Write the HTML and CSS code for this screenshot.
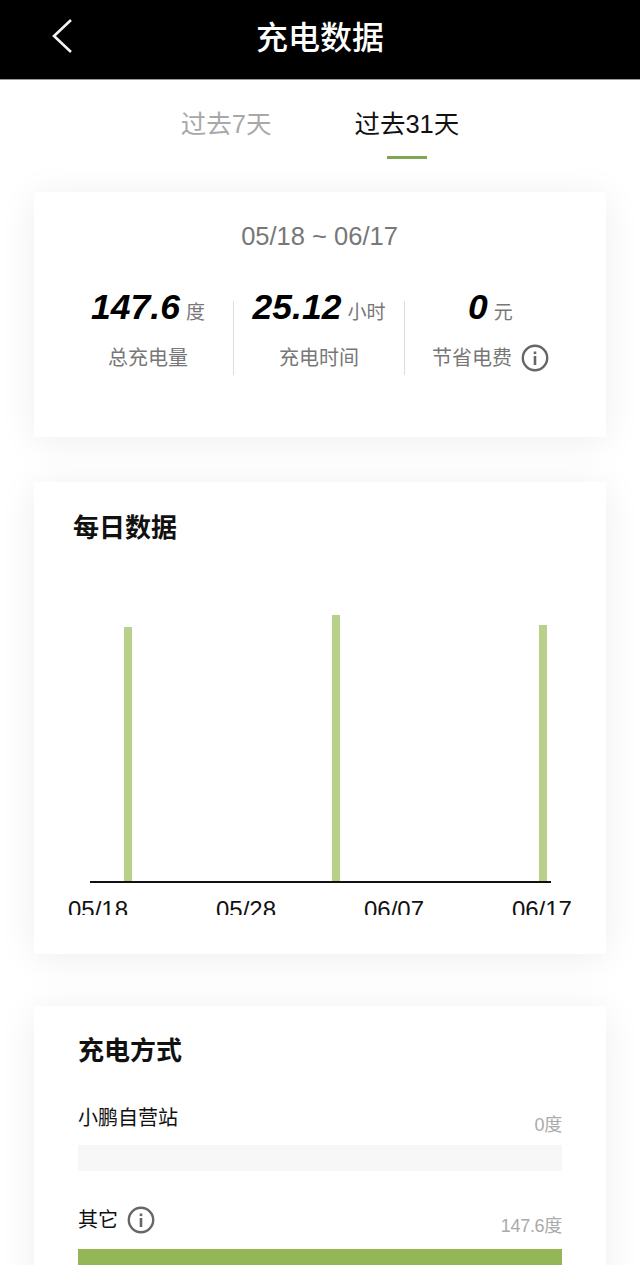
FILE: index.html
```html
<!DOCTYPE html>
<html lang="zh-CN">
<head>
    <meta charset="UTF-8">
    <meta name="viewport" content="width=device-width, initial-scale=1.0">
    <title>充电数据</title>
    <link rel="stylesheet" href="styles.css">
</head>
<body>
    <header class="topbar">
        <a href="#" class="back" aria-label="返回">
            <svg width="22" height="34" viewBox="0 0 22 34"><path d="M20 1 L3 17 L20 33" fill="none" stroke="#f2f2f2" stroke-width="2.6"/></svg>
        </a>
        <h1>充电数据</h1>
    </header>

    <nav class="tabs">
        <a href="#" class="tab">过去7天</a>
        <a href="#" class="tab active">过去31天</a>
    </nav>

    <section class="card summary">
        <div class="date-range">05/18 ~ 06/17</div>
        <div class="stats">
            <div class="stat">
                <div class="stat-value"><strong>147.6</strong><span>度</span></div>
                <div class="stat-label">总充电量</div>
            </div>
            <div class="stat">
                <div class="stat-value"><strong>25.12</strong><span>小时</span></div>
                <div class="stat-label">充电时间</div>
            </div>
            <div class="stat">
                <div class="stat-value"><strong>0</strong><span>元</span></div>
                <div class="stat-label">节省电费
                    <svg class="info" width="28" height="28" viewBox="0 0 28 28"><circle cx="14" cy="14" r="12.2" fill="none" stroke="#666" stroke-width="2.4"/><rect x="12.7" y="12" width="2.6" height="9" fill="#666"/><rect x="12.7" y="7.5" width="2.6" height="2.6" fill="#666"/></svg>
                </div>
            </div>
        </div>
    </section>

    <section class="card daily">
        <h2>每日数据</h2>
        <div class="chart">
            <div class="bars">
                <div class="bar" style="height: 254px"></div>
                <div class="bar" style="height: 266px"></div>
                <div class="bar" style="height: 256px"></div>
            </div>
            <div class="axis-labels">
                <span>05/18</span>
                <span>05/28</span>
                <span>06/07</span>
                <span>06/17</span>
            </div>
        </div>
    </section>

    <section class="card methods">
        <h2>充电方式</h2>
        <div class="method">
            <div class="method-head">
                <span class="method-name">小鹏自营站</span>
                <span class="method-value">0度</span>
            </div>
            <div class="track"></div>
        </div>
        <div class="method">
            <div class="method-head">
                <span class="method-name">其它
                    <svg class="info" width="28" height="28" viewBox="0 0 28 28"><circle cx="14" cy="14" r="12.2" fill="none" stroke="#666" stroke-width="2.4"/><rect x="12.7" y="12" width="2.6" height="9" fill="#666"/><rect x="12.7" y="7.5" width="2.6" height="2.6" fill="#666"/></svg>
                </span>
                <span class="method-value">147.6度</span>
            </div>
            <div class="track"><div class="fill" style="width: 100%"></div></div>
        </div>
    </section>
</body>
</html>
```

FILE: styles.css
```css
:root {
    --green: #94b755;
    --text-color: #111;
    --light-text: #777;
    --shadow: 0 4px 36px rgba(0, 0, 0, 0.07);
}

* {
    margin: 0;
    padding: 0;
    box-sizing: border-box;
}

html, body {
    height: 100vh;
    overflow: hidden;
}

body {
    font-family: "Liberation Sans", "Noto Sans CJK SC", sans-serif;
    color: var(--text-color);
    background-color: #fff;
}

.topbar {
    height: 80px;
    background-color: #000;
    border-bottom: 1px solid #999;
    display: flex;
    align-items: center;
    justify-content: center;
    position: relative;
}

.topbar h1 {
    font-size: 32px;
    font-weight: 500;
    color: #fff;
    margin-top: -10px;
}

.back {
    position: absolute;
    left: 51px;
    top: 19px;
    line-height: 0;
}

.tabs {
    height: 79px;
    display: flex;
    justify-content: center;
    gap: 83px;
}

.tab {
    font-size: 25.5px;
    line-height: 38px;
    padding-top: 25px;
    color: #a8a8a8;
    text-decoration: none;
    position: relative;
}

.tab.active {
    color: var(--text-color);
}

.tab.active::after {
    content: "";
    position: absolute;
    left: 50%;
    bottom: 0;
    width: 40px;
    height: 3px;
    margin-left: -20px;
    background-color: #7fa650;
}

.card {
    margin: 33px 34px 0;
    background-color: #fff;
    box-shadow: var(--shadow);
}

.summary {
    height: 245px;
    padding: 26px 30px 0 29px;
}

.date-range {
    font-size: 25.5px;
    line-height: 36px;
    text-align: center;
    color: var(--light-text);
}

.stats {
    display: grid;
    grid-template-columns: repeat(3, 171px);
    margin-top: 47px;
}

.stat {
    height: 74px;
    text-align: center;
    border-right: 1px solid #ddd;
}

.stat:last-child {
    border-right: none;
}

.stat-value {
    height: 40px;
    margin-top: -14px;
    line-height: 40px;
    white-space: nowrap;
}

.stat-value strong {
    font-size: 35.5px;
    font-style: italic;
    font-weight: 700;
    color: #000;
}

.stat-value span {
    font-size: 19px;
    margin-left: 6px;
    color: var(--light-text);
}

.stat-label {
    margin-top: 13px;
    font-size: 20px;
    line-height: 36px;
    color: var(--light-text);
    display: flex;
    align-items: center;
    justify-content: center;
    gap: 9px;
}

.card h2 {
    font-size: 26px;
    font-weight: 700;
    line-height: 38px;
}

.daily {
    height: 472px;
    margin-top: 45px;
    padding: 27px 35px 0 39px;
}

.chart {
    margin-top: 50px;
    margin-left: -22px;
    margin-right: -1px;
}

.bars {
    height: 286px;
    margin-left: 39px;
    margin-right: 21px;
    padding-left: 34px;
    padding-right: 4px;
    border-bottom: 2px solid #111;
    display: flex;
    justify-content: space-between;
    align-items: flex-end;
}

.bar {
    width: 8px;
    background-color: #b7d08a;
}

.axis-labels {
    height: 32px;
    overflow: hidden;
    display: flex;
    justify-content: space-between;
    padding-top: 14px;
    padding-left: 17px;
    font-size: 24px;
    line-height: 26px;
    color: #111;
}

.methods {
    margin-top: 52px;
    padding: 26px 44px 0;
    height: 400px;
}

.method {
    margin-top: 29px;
}

.method + .method {
    margin-top: 32px;
}

.method-head {
    display: flex;
    justify-content: space-between;
    align-items: flex-end;
    height: 46px;
}

.method-name {
    font-size: 20px;
    line-height: 36px;
    display: flex;
    align-items: center;
    gap: 9px;
    margin-bottom: 9px;
}

.method + .method .method-name {
    margin-bottom: 11px;
}

.method-value {
    font-size: 18px;
    line-height: 26px;
    letter-spacing: -0.3px;
    color: #aaa;
    margin-bottom: 7px;
}

.method + .method .method-value {
    margin-bottom: 10px;
}

.track {
    height: 26px;
    background-color: #f7f7f7;
}

.fill {
    height: 100%;
    background-color: var(--green);
}

.info {
    flex: none;
}
```
